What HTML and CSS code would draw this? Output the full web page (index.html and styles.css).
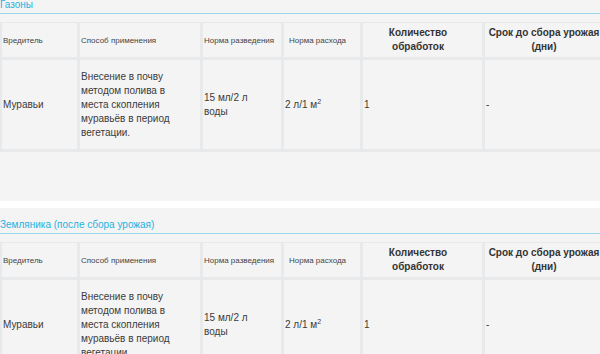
FILE: index.html
```html
<!DOCTYPE html>
<html lang="ru">
<head>
    <meta charset="UTF-8">
    <meta name="viewport" content="width=device-width, initial-scale=1.0">
    <title>Обработки</title>
    <link rel="stylesheet" href="styles.css">
</head>
<body>
    <div class="page">
        <section class="crop">
            <h3 class="crop-title">Газоны</h3>
            <table class="usage">
                <colgroup>
                    <col class="c1"><col class="c2"><col class="c3"><col class="c4"><col class="c5"><col class="c6">
                </colgroup>
                <tr class="head">
                    <th>Вредитель</th>
                    <th>Способ применения</th>
                    <th>Норма разведения</th>
                    <th class="center">Норма расхода</th>
                    <th class="big">Количество обработок</th>
                    <th class="big">Срок до сбора урожая (дни)</th>
                </tr>
                <tr class="row">
                    <td>Муравьи</td>
                    <td>Внесение в почву методом полива в места скопления муравьёв в период вегетации.</td>
                    <td>15 мл/2 л воды</td>
                    <td>2 л/1 м<sup>2</sup></td>
                    <td>1</td>
                    <td>-</td>
                </tr>
            </table>
        </section>

        <section class="crop">
            <h3 class="crop-title">Земляника (после сбора урожая)</h3>
            <table class="usage">
                <colgroup>
                    <col class="c1"><col class="c2"><col class="c3"><col class="c4"><col class="c5"><col class="c6">
                </colgroup>
                <tr class="head">
                    <th>Вредитель</th>
                    <th>Способ применения</th>
                    <th>Норма разведения</th>
                    <th class="center">Норма расхода</th>
                    <th class="big">Количество обработок</th>
                    <th class="big">Срок до сбора урожая (дни)</th>
                </tr>
                <tr class="row">
                    <td>Муравьи</td>
                    <td>Внесение в почву методом полива в места скопления муравьёв в период вегетации.</td>
                    <td>15 мл/2 л воды</td>
                    <td>2 л/1 м<sup>2</sup></td>
                    <td>1</td>
                    <td>-</td>
                </tr>
            </table>
        </section>
    </div>
</body>
</html>
```

FILE: styles.css
```css
html,
body {
    margin: 0;
    background: #fff;
    overflow: hidden;
}

body {
    font-family: "Liberation Sans", Arial, sans-serif;
    color: #3b3b3b;
}

.page {
    margin-top: -12px;
}

.crop {
    background: #f4f4f4;
    margin-bottom: 7px;
    padding-bottom: 49px;
}

.crop-title {
    margin: 0;
    padding: 10px 0 1px;
    font-size: 10px;
    line-height: 14px;
    font-weight: normal;
    color: #25b2e0;
    border-bottom: 1px solid #9ad8ee;
}

.usage {
    margin-top: 8px;
    width: 615px;
    table-layout: fixed;
    border-collapse: separate;
    border-spacing: 0;
    border-top: 1px solid #e8e9eb;
    border-left: 2px solid #e8e9eb;
}

.c1 { width: 78px; }
.c2 { width: 123px; }
.c3 { width: 81px; }
.c4 { width: 79px; }
.c5 { width: 122px; }
.c6 { width: 130px; }

.usage th,
.usage td {
    box-sizing: border-box;
    padding: 0 10px 0 1px;
    border-right: 3px solid #e8e9eb;
    border-bottom: 3px solid #e8e9eb;
    vertical-align: middle;
    text-align: left;
}

.head th {
    height: 37px;
    padding-right: 2px;
    font-size: 8px;
    line-height: 11px;
    font-weight: normal;
    white-space: nowrap;
    color: #444;
}

.head th.center {
    padding-right: 10px;
    text-align: center;
}

.head th.big {
    padding-right: 10px;
    text-align: center;
    white-space: normal;
    font-size: 10px;
    line-height: 14px;
    font-weight: bold;
    color: #333;
}

.row td {
    height: 92px;
    font-size: 10px;
    line-height: 14px;
}

sup {
    font-size: 7px;
    line-height: 0;
}
```
